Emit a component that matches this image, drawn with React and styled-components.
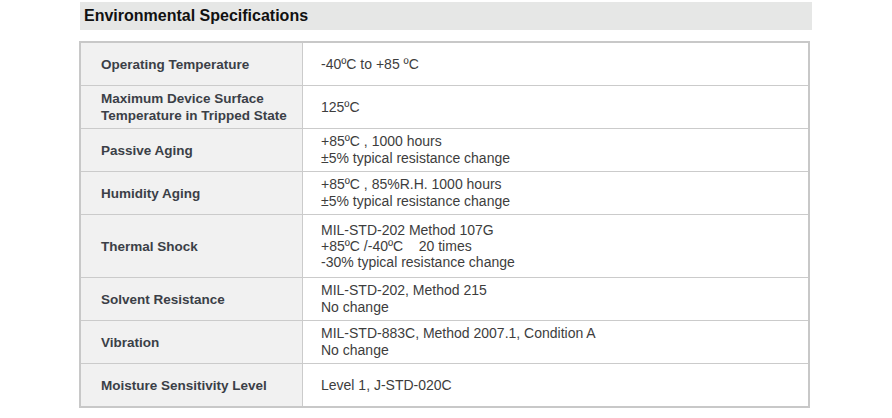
import React from "react";
import styled, { createGlobalStyle } from "styled-components";

const GlobalStyle = createGlobalStyle`
  body {
    margin: 0;
    background: #fff;
    font-family: "Liberation Sans", Arial, sans-serif;
  }
`;

const Page = styled.div`
  width: 733px;
  margin-left: 79px;
  padding-top: 2px;
`;

const SectionTitle = styled.h2`
  margin: 0 0 11px 1px;
  height: 28px;
  padding-left: 4px;
  display: flex;
  align-items: center;
  background: #e6e7e6;
  font-size: 16px;
  font-weight: bold;
  color: #111;
`;

const Table = styled.div`
  width: 727px;
  border: 2px solid #c8c8c8;
`;

const Row = styled.div`
  display: grid;
  grid-template-columns: 222px 1fr;
  height: ${(props) => props.$height || 42}px;
  & + & {
    border-top: 1px solid #cbcbcb;
  }
`;

const Label = styled.div`
  display: flex;
  align-items: center;
  padding: 0 10px 0 20px;
  background: #f1f1f1;
  border-right: 1px solid #cbcbcb;
  font-size: 13.5px;
  font-weight: bold;
  line-height: 17px;
  color: #3b3f47;
`;

const Value = styled.div`
  display: flex;
  flex-direction: column;
  justify-content: center;
  padding: 0 10px 0 18px;
  font-size: 14px;
  line-height: ${(props) => (props.$tight ? 16 : 17)}px;
  color: #3d3d3d;
`;

const specs = [
  ["Operating Temperature", ["-40ºC to +85 ºC"]],
  ["Maximum Device Surface Temperature in Tripped State", ["125ºC"]],
  ["Passive Aging", ["+85ºC , 1000 hours", "±5% typical resistance change"]],
  ["Humidity Aging", ["+85ºC , 85%R.H. 1000 hours", "±5% typical resistance change"]],
  [
    "Thermal Shock",
    ["MIL-STD-202 Method 107G", "+85ºC /-40ºC\u00a0\u00a0\u00a0\u00a020 times", "-30% typical resistance change"],
    62,
  ],
  ["Solvent Resistance", ["MIL-STD-202, Method 215", "No change"]],
  ["Vibration", ["MIL-STD-883C, Method 2007.1, Condition A", "No change"]],
  ["Moisture Sensitivity Level", ["Level 1, J-STD-020C"]],
];

const App = () => (
  <>
    <GlobalStyle />
    <Page>
      <SectionTitle>Environmental Specifications</SectionTitle>
      <Table>
        {specs.map(([label, lines, height]) => (
          <Row key={label} $height={height}>
            <Label>{label}</Label>
            <Value $tight={lines.length > 2}>
              {lines.map((line) => (
                <div key={line}>{line}</div>
              ))}
            </Value>
          </Row>
        ))}
      </Table>
    </Page>
  </>
);

export default App;
